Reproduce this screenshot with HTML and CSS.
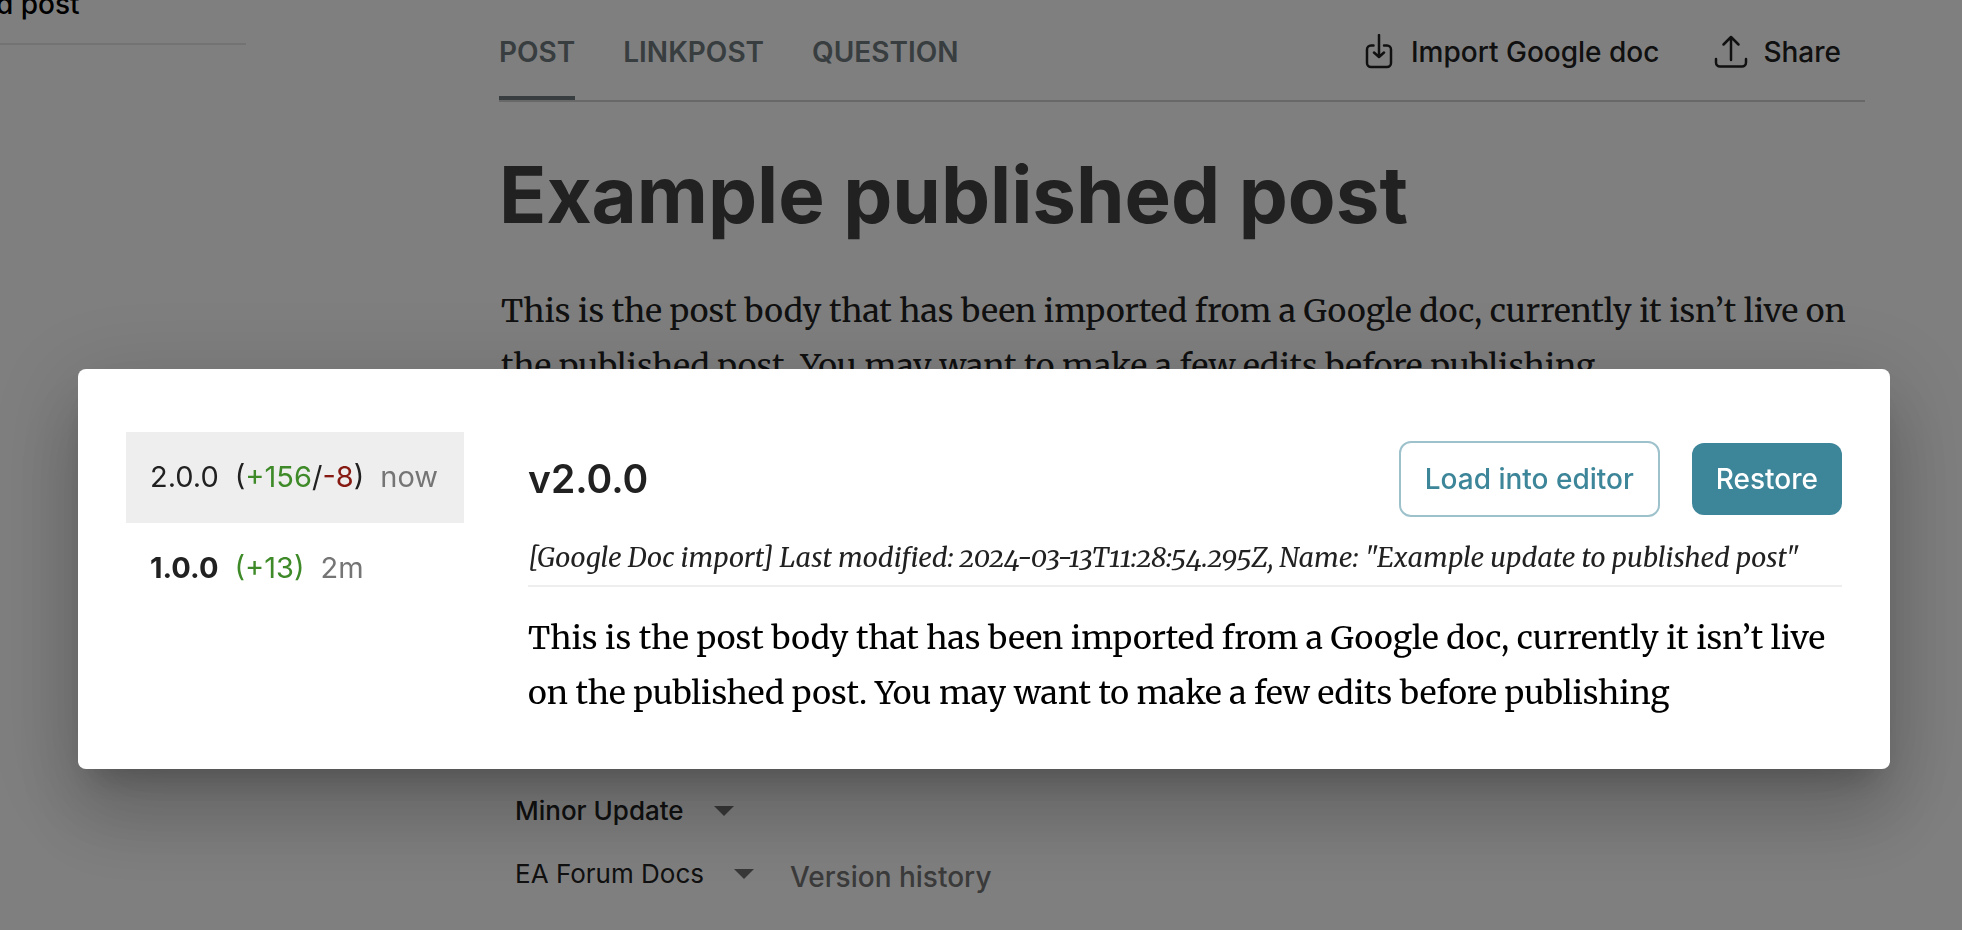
FILE: index.html
```
<!DOCTYPE html>
<html lang="en">
<head>
    <meta charset="UTF-8">
    <meta name="viewport" content="width=device-width, initial-scale=1.0">
    <title>Version history</title>
    <link rel="stylesheet" href="styles.css">
</head>
<body>
    <div class="page">
        <aside class="sidebar">
            <p class="sidebar-title">d post</p>
        </aside>
        <main class="editor">
            <nav class="tabs">
                <a class="tab active" href="#post">POST</a>
                <a class="tab" href="#linkpost">LINKPOST</a>
                <a class="tab" href="#question">QUESTION</a>
                <div class="actions">
                    <button class="action" type="button">
                        <svg class="icon" viewBox="0 0 36 36" aria-hidden="true">
                            <path d="M12.500 11.500H10a4 4 0 0 0-4 4V29a4 4 0 0 0 4 4h16a4 4 0 0 0 4-4V15.500a4 4 0 0 0-4-4h-3"/>
                            <path d="M18 1v21M13 18.500l5 4.500 5-4.500"/>
                        </svg>
                        Import Google doc
                    </button>
                    <button class="action" type="button">
                        <svg class="icon" viewBox="0 0 36 36" aria-hidden="true">
                            <path d="M3 25v3.500a4 4 0 0 0 4 4h22a4 4 0 0 0 4-4V25"/>
                            <path d="M18 26V3M10.500 10.500l7.500-7.500 7.500 7.500"/>
                        </svg>
                        Share
                    </button>
                </div>
            </nav>
            <h1 class="title">Example published post</h1>
            <p class="post-body">This is the post body that has been imported from a Google doc, currently it isn’t live on the published post. You may want to make a few edits before publishing</p>
            <div class="footer">
                <div class="select-row">
                    <select class="select bold" aria-label="Update type"><option>Minor Update</option></select>
                    <svg class="caret" viewBox="0 0 20 10" aria-hidden="true"><path d="M0 0h20L10 10z"/></svg>
                </div>
                <div class="select-row">
                    <select class="select" aria-label="Editor type"><option>EA Forum Docs</option></select>
                    <svg class="caret" viewBox="0 0 20 10" aria-hidden="true"><path d="M0 0h20L10 10z"/></svg>
                    <button class="history" type="button">Version history</button>
                </div>
            </div>
        </main>
    </div>

    <div class="overlay">
        <div class="dialog" role="dialog" aria-label="Version history">
            <ul class="versions">
                <li><a class="version selected" href="#v2">2.0.0 <span>(<span class="added">+156</span>/<span class="removed">-8</span>)</span> <span class="time">now</span></a></li>
                <li><a class="version" href="#v1"><b>1.0.0</b> <span class="added">(+13)</span> <span class="time">2m</span></a></li>
            </ul>
            <section class="revision">
                <div class="revision-top">
                    <h2 class="revision-name">v2.0.0</h2>
                    <button class="btn outlined" type="button">Load into editor</button>
                    <button class="btn filled" type="button">Restore</button>
                </div>
                <p class="note">[Google Doc import] Last modified: 2024-03-13T11:28:54.295Z, Name: "Example update to published post"</p>
                <p class="revision-body">This is the post body that has been imported from a Google doc, currently it isn’t live on the published post. You may want to make a few edits before publishing</p>
            </section>
        </div>
    </div>
</body>
</html>
```
FILE: styles.css
```
* {
    box-sizing: border-box;
}
body {
    margin: 0;
    background: #fff;
    color: #212121;
    font-family: Inter, "Liberation Sans", sans-serif;
    font-size: 28px;
    overflow: hidden;
}
h1, h2, p, ul {
    margin: 0;
    padding: 0;
}
a {
    color: inherit;
    text-decoration: none;
}
button, select {
    margin: 0;
    padding: 0;
    border: 0;
    background: none;
    color: inherit;
    font: inherit;
}

.page {
    display: grid;
    grid-template-columns: 246px minmax(0, 1fr);
    column-gap: 253px;
    padding-right: 97px;
    height: 100vh;
    overflow: hidden;
}
.sidebar-title {
    height: 45px;
    margin-left: -4px;
    border-bottom: 2px solid #e6e6e6;
    color: #000;
    font-weight: 500;
    line-height: 8px;
}

.tabs {
    display: flex;
    gap: 48px;
    height: 102px;
    border-bottom: 2px solid #d0d0d0;
    line-height: 34px;
}
.tab {
    height: 100px;
    padding-top: 35px;
    color: #707b7e;
    font-weight: 600;
}
.tab.active {
    border-bottom: 4px solid #707b7e;
}
.actions {
    display: flex;
    gap: 54px;
    margin-left: auto;
    padding: 32px 24px 0 0;
    height: 71px;
    font-weight: 500;
}
.action {
    display: flex;
    align-items: center;
    gap: 14px;
}
.icon {
    width: 36px;
    height: 36px;
    fill: none;
    stroke: #212121;
    stroke-width: 2.5;
    stroke-linecap: round;
    stroke-linejoin: round;
}
.title {
    margin-top: 45px;
    color: #424242;
    font-size: 78px;
    font-weight: 700;
    line-height: 96px;
}
.post-body, .revision-body {
    font-family: Merriweather, "DejaVu Serif Condensed", "Liberation Serif", serif;
    font-size: 32px;
    line-height: 55px;
}
.post-body {
    min-height: 495px;
    margin-top: 41px;
    padding-left: 2px;
}
.footer {
    display: flex;
    flex-direction: column;
    padding-left: 16px;
    font-size: 26px;
}
.select-row {
    display: flex;
    align-items: center;
    height: 63px;
}
.select {
    appearance: none;
}
.bold {
    font-weight: 500;
}
.caret {
    width: 20px;
    height: 10px;
    margin-left: 30px;
    fill: #707070;
}
.history {
    margin-left: 36px;
    padding-top: 6px;
    color: #757575;
    font-size: 28px;
    font-weight: 500;
}

.overlay {
    position: fixed;
    inset: 0;
    padding: 369px 72px 0 78px;
    background: rgba(0, 0, 0, .5);
}
.dialog {
    display: flex;
    gap: 64px;
    padding: 63px 48px 48px;
    border-radius: 8px;
    background: #fff;
    box-shadow: 0 22px 30px -14px rgba(0, 0, 0, .2),
                0 48px 76px 6px rgba(0, 0, 0, .14),
                0 18px 92px 16px rgba(0, 0, 0, .12);
}
.versions {
    flex: none;
    width: 338px;
    list-style: none;
    font-size: 29px;
}
.version {
    display: flex;
    gap: 16px;
    padding: 27px 24px 29px;
    line-height: 35px;
    white-space: nowrap;
}
.version.selected {
    background: #eee;
}
.added {
    color: #3e8a28;
}
.removed {
    color: #861a12;
}
.time {
    color: #757575;
}
.revision {
    flex: 1;
    min-width: 0;
}
.revision-top {
    display: flex;
    align-items: center;
    gap: 32px;
    margin-top: 9px;
}
.revision-name {
    margin-right: auto;
    padding-bottom: 2px;
    font-size: 39px;
    font-weight: 600;
}
.btn {
    height: 72px;
    padding: 0 24px;
    border-radius: 12px;
    font-weight: 500;
}
.outlined {
    height: 76px;
    border: 2px solid #9ec2cc;
    color: #3d8599;
}
.filled {
    background: #3d8599;
    color: #fff;
}
.note {
    padding: 20px 0 8px;
    border-bottom: 2px solid #eee;
    font-family: Merriweather, "DejaVu Serif Condensed", "Liberation Serif", serif;
    font-size: 27px;
    font-style: italic;
    font-variant-numeric: oldstyle-nums;
    line-height: 40px;
}
.revision-body {
    margin-top: 24px;
    color: #000;
}
```
